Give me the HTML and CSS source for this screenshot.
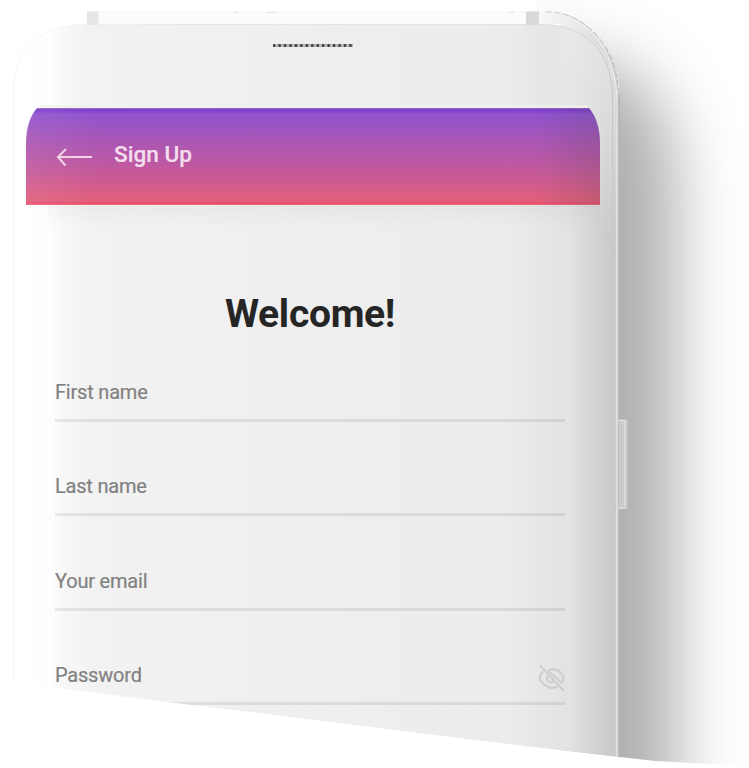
FILE: index.html
```html
<!DOCTYPE html>
<html lang="en">
<head>
<meta charset="utf-8">
<title>Sign Up</title>
<link rel="stylesheet" href="styles.css">
</head>
<body>
<main class="stage">
  <svg class="device" viewBox="0 0 749 768" aria-hidden="true">
    <defs>
      <linearGradient id="body" gradientUnits="userSpaceOnUse" x1="0" y1="0" x2="620" y2="0">
        <stop offset="0" stop-color="#fff"/>
        <stop offset=".078" stop-color="#fefefe"/>
        <stop offset=".108" stop-color="#f7f7f7"/>
        <stop offset=".15" stop-color="#f2f2f2"/>
        <stop offset=".45" stop-color="#efefef"/>
        <stop offset=".82" stop-color="#ececec"/>
        <stop offset=".92" stop-color="#e2e2e2"/>
        <stop offset=".95" stop-color="#d7d7d7"/>
        <stop offset=".975" stop-color="#cdcdcd"/>
        <stop offset="1" stop-color="#c9c9c9"/>
      </linearGradient>
      <linearGradient id="cap" gradientUnits="userSpaceOnUse" x1="0" y1="0" x2="0" y2="240">
        <stop offset="0" stop-color="#fff" stop-opacity=".5"/>
        <stop offset=".5" stop-color="#fff" stop-opacity=".3"/>
        <stop offset="1" stop-color="#fff" stop-opacity="0"/>
      </linearGradient>
      <linearGradient id="capx" gradientUnits="userSpaceOnUse" x1="540" y1="0" x2="600" y2="0">
        <stop offset="0" stop-color="#000"/>
        <stop offset="1" stop-color="#fff"/>
      </linearGradient>
      <linearGradient id="rim" gradientUnits="userSpaceOnUse" x1="540" y1="0" x2="619" y2="60">
        <stop offset="0" stop-color="#fcfcfc"/>
        <stop offset=".6" stop-color="#e3e3e3"/>
        <stop offset="1" stop-color="#cfcfcf"/>
      </linearGradient>
      <linearGradient id="edge" gradientUnits="userSpaceOnUse" x1="80" y1="0" x2="619" y2="0">
        <stop offset="0" stop-color="#f3f3f3"/>
        <stop offset=".2" stop-color="#e6e6e6"/>
        <stop offset=".85" stop-color="#e4e4e4"/>
        <stop offset="1" stop-color="#c4c4c4"/>
      </linearGradient>
      <linearGradient id="under" x1="0" y1="0" x2="0" y2="1">
        <stop offset="0" stop-color="#000" stop-opacity=".035"/>
        <stop offset="1" stop-color="#000" stop-opacity="0"/>
      </linearGradient>
      <mask id="right"><rect width="749" height="300" fill="url(#capx)"/></mask>
      <filter id="soft" filterUnits="userSpaceOnUse" x="300" y="-100" width="600" height="1200"><feGaussianBlur stdDeviation="33"/></filter>
      <clipPath id="outside"><path d="M535 0H749V768H619V90Q618 65 603 45C588 23 565 11 535 11Z"/></clipPath>
    </defs>
    <g clip-path="url(#outside)">
      <path d="M400 58H580Q676 70 676 190V1000H400Z" fill="#000" fill-opacity=".315" filter="url(#soft)"/>
    </g>
    <path d="M88 11H545C570 11 590 24 603 45Q619 65 619 100V768H560V24H88Z" fill="url(#rim)"/>
    <path d="M13 768V92C13 48 40 24 88 24H540C588 24 614 52 616 92V768Z" fill="url(#body)"/>
    <path d="M88 24H540C588 24 614 52 616 92V240H88Z" fill="url(#cap)" mask="url(#right)"/>
    <path d="M48 205H600V228H48Z" fill="url(#under)"/>
    <path d="M40 106.500H588" stroke="#f1f1ea" stroke-width="2"/>
    <path d="M13.500 768V92C13.500 48 40 24.500 88 24.500" fill="none" stroke="#f7f7f7"/>
    <path d="M88 24.500H540C588 24.500 610 52 612.500 92V768" fill="none" stroke="url(#edge)"/>
    <path d="M98 12H526" stroke="#f7f7f7"/>
    <path d="M234 12.500h4M266 12.500h10M509 12.500h5" stroke="#e2e2e2"/>
    <path d="M87 11.500h11.500V25H87Z" fill="#e6e6e6"/>
    <path d="M526 11.500h13V25H526Z" fill="#d9d9d9"/>
    <path d="M545 12C570 11 591 25 604 45Q618.500 65 618.500 100" fill="none" stroke="#b8b8b8" stroke-dasharray="7 2"/>
    <path d="M545 12C570 12.500 589 26 602 46Q616.500 68 617 100V768" fill="none" stroke="#f2f2f2"/>
    <path d="M617.500 90V768" stroke="#dadada" stroke-width="1.500"/>
    <path d="M619 95V768" stroke="#b4b4b4" stroke-width="1.500"/>
    <path d="M619 419.500h7.500V509H619Z" fill="#cbcbcb"/>
    <path d="M618 420.500h7V508h-7" fill="none" stroke="#dedede" stroke-width="1.500"/>
    <path d="M619 418.500h6.500" stroke="#a8a8a8"/>
    <path d="M627.500 420V509" stroke="#c6c6c6"/>
    <path d="M273 45.500H353" stroke="#b4b4b4" stroke-width="3"/>
    <path d="M273 45.500H353" stroke="#444" stroke-width="3" stroke-dasharray="2.300 3.150"/>
  </svg>
  <section class="screen">
    <header class="bar">
      <svg class="back" viewBox="0 0 38 22"><path d="M36 11H2M10 3L2 11L9.500 19.500"/></svg>
      <h1 class="title">Sign Up</h1>
    </header>
    <form class="form">
      <h2 class="welcome">Welcome!</h2>
      <div class="field"><label>First name</label></div>
      <div class="field"><label>Last name</label></div>
      <div class="field"><label>Your email</label></div>
      <div class="field"><label>Password</label>
        <svg class="eye" viewBox="0 0 28 28"><path d="M1.500 1L26 27M5 7.500Q-1 14 4 18.500Q12 27 20 22M10 6.500Q19 2 25 12Q27 15 23 18.500L10 6.500M10 11Q7 17 13 18.500Q16 18 15.500 16"/></svg>
      </div>
    </form>
  </section>
</main>
</body>
</html>
```
FILE: styles.css
```css
* { box-sizing: border-box; }
body { margin: 0; background: #fff; font-family: Roboto, "Liberation Sans", sans-serif; }
.stage {
  position: relative;
  width: 749px;
  height: 768px;
  overflow: hidden;
  padding: 108px 149px 0 26px;
  clip-path: polygon(0 0, 749px 0, 749px 766px, 655px 761px, 620px 757px, 500px 743px, 250px 712px, 167px 702px, 50px 687px, 15px 683px, 0 681px);
}
.device { position: absolute; inset: 0; width: 749px; height: 768px; }
.screen { position: relative; }
.bar {
  height: 97px;
  display: flex;
  align-items: center;
  gap: 21px;
  padding-left: 30px;
  background:
    linear-gradient(90deg, rgba(255,255,255,.07), transparent 13%, transparent 89%, rgba(70,70,70,.18)),
    linear-gradient(#a184cc 0, #8241cc 1px, #8241cc 3px, #9053cd 6px, #a956b5 33px, #c4599b 63px, #e15f7b 93px, #e84f6d 95px, #e84f6d 96px, #f07d94 97px);
  clip-path: path("M11 0H563C570 8 574 20 574 36V97H0V36C0 20 4 8 11 0Z");
}
.back { width: 38px; height: 22px; fill: none; stroke: #f0d3e6; stroke-width: 2; }
.title { margin: 0 0 3px -1px; font-size: 22.600px; font-weight: 500; line-height: 30px; color: #f3deed; -webkit-text-stroke: .2px #f3deed; }
.form { padding: 83px 35px 0 29px; }
.welcome { margin: 0; height: 52px; line-height: 52px; font-size: 39px; letter-spacing: -.3px; font-weight: 700; text-align: center; color: #252525; }
.field {
  height: 94.300px;
  display: flex;
  align-items: flex-end;
  justify-content: space-between;
  padding-bottom: 15px;
  border-bottom: 3px solid rgba(0,0,0,.08);
  color: #818181;
}
.welcome + .field { height: 82px; }
.field label { font-size: 20px; letter-spacing: -.2px; line-height: 24px; -webkit-text-stroke: .2px #818181; }
.eye { width: 28px; height: 28px; margin: 0 -1px -5px 0; fill: none; stroke: #cecece; stroke-width: 2.200; }
```
